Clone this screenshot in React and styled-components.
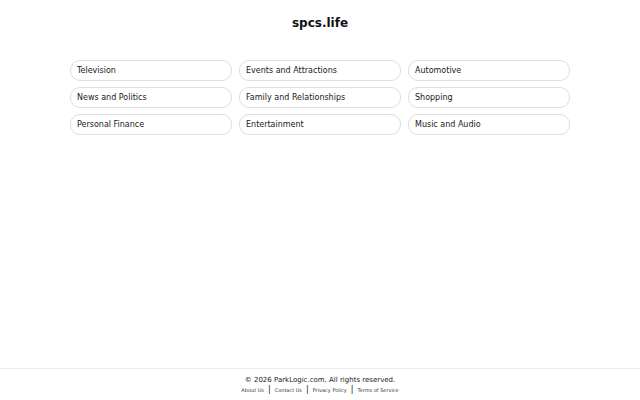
import React from "react";
import styled, { createGlobalStyle } from "styled-components";

const GlobalStyle = createGlobalStyle`
  html, body {
    margin: 0;
    padding: 0;
    background: #fff;
    font-family: "DejaVu Sans", "Liberation Sans", sans-serif;
  }
`;

const Page = styled.div`
  display: flex;
  flex-direction: column;
  min-height: 100vh;
`;

const Main = styled.main`
  flex: 1;
  padding-top: 16px;
`;

const Title = styled.h1`
  margin: 0;
  font-size: 12px;
  line-height: 15px;
  font-weight: bold;
  color: #111;
  text-align: center;
`;

const Grid = styled.div`
  display: grid;
  grid-template-columns: repeat(3, 1fr);
  column-gap: 7px;
  row-gap: 6.5px;
  width: 500px;
  margin: 29px auto 0;
`;

const Pill = styled.a`
  display: flex;
  align-items: center;
  height: 20.5px;
  box-sizing: border-box;
  padding: 0 6px;
  border: 1px solid #dedede;
  border-radius: 10px;
  font-size: 8px;
  color: #1a1a1a;
  text-decoration: none;
`;

const Footer = styled.footer`
  border-top: 1px solid #ececec;
  height: 32px;
  box-sizing: border-box;
  padding-top: 7px;
  text-align: center;
`;

const Copy = styled.div`
  font-size: 7px;
  line-height: 9px;
  color: #222;
`;

const Links = styled.div`
  display: flex;
  justify-content: center;
  align-items: center;
  gap: 4px;
  height: 9px;
`;

const FooterLink = styled.a`
  font-size: 5px;
  color: #333;
  text-decoration: none;
`;

const Sep = styled.span`
  font-size: 8px;
  line-height: 9px;
  color: #111;
`;

const topics = [
  "Television",
  "Events and Attractions",
  "Automotive",
  "News and Politics",
  "Family and Relationships",
  "Shopping",
  "Personal Finance",
  "Entertainment",
  "Music and Audio",
];

const links = ["About Us", "Contact Us", "Privacy Policy", "Terms of Service"];

export default function App() {
  return (
    <Page>
      <GlobalStyle />
      <Main>
        <Title>spcs.life</Title>
        <Grid>
          {topics.map((t) => (
            <Pill key={t} href="#">
              {t}
            </Pill>
          ))}
        </Grid>
      </Main>
      <Footer>
        <Copy>© 2026 ParkLogic.com. All rights reserved.</Copy>
        <Links>
          {links.map((l, i) => (
            <React.Fragment key={l}>
              {i > 0 && <Sep>|</Sep>}
              <FooterLink href="#">{l}</FooterLink>
            </React.Fragment>
          ))}
        </Links>
      </Footer>
    </Page>
  );
}
